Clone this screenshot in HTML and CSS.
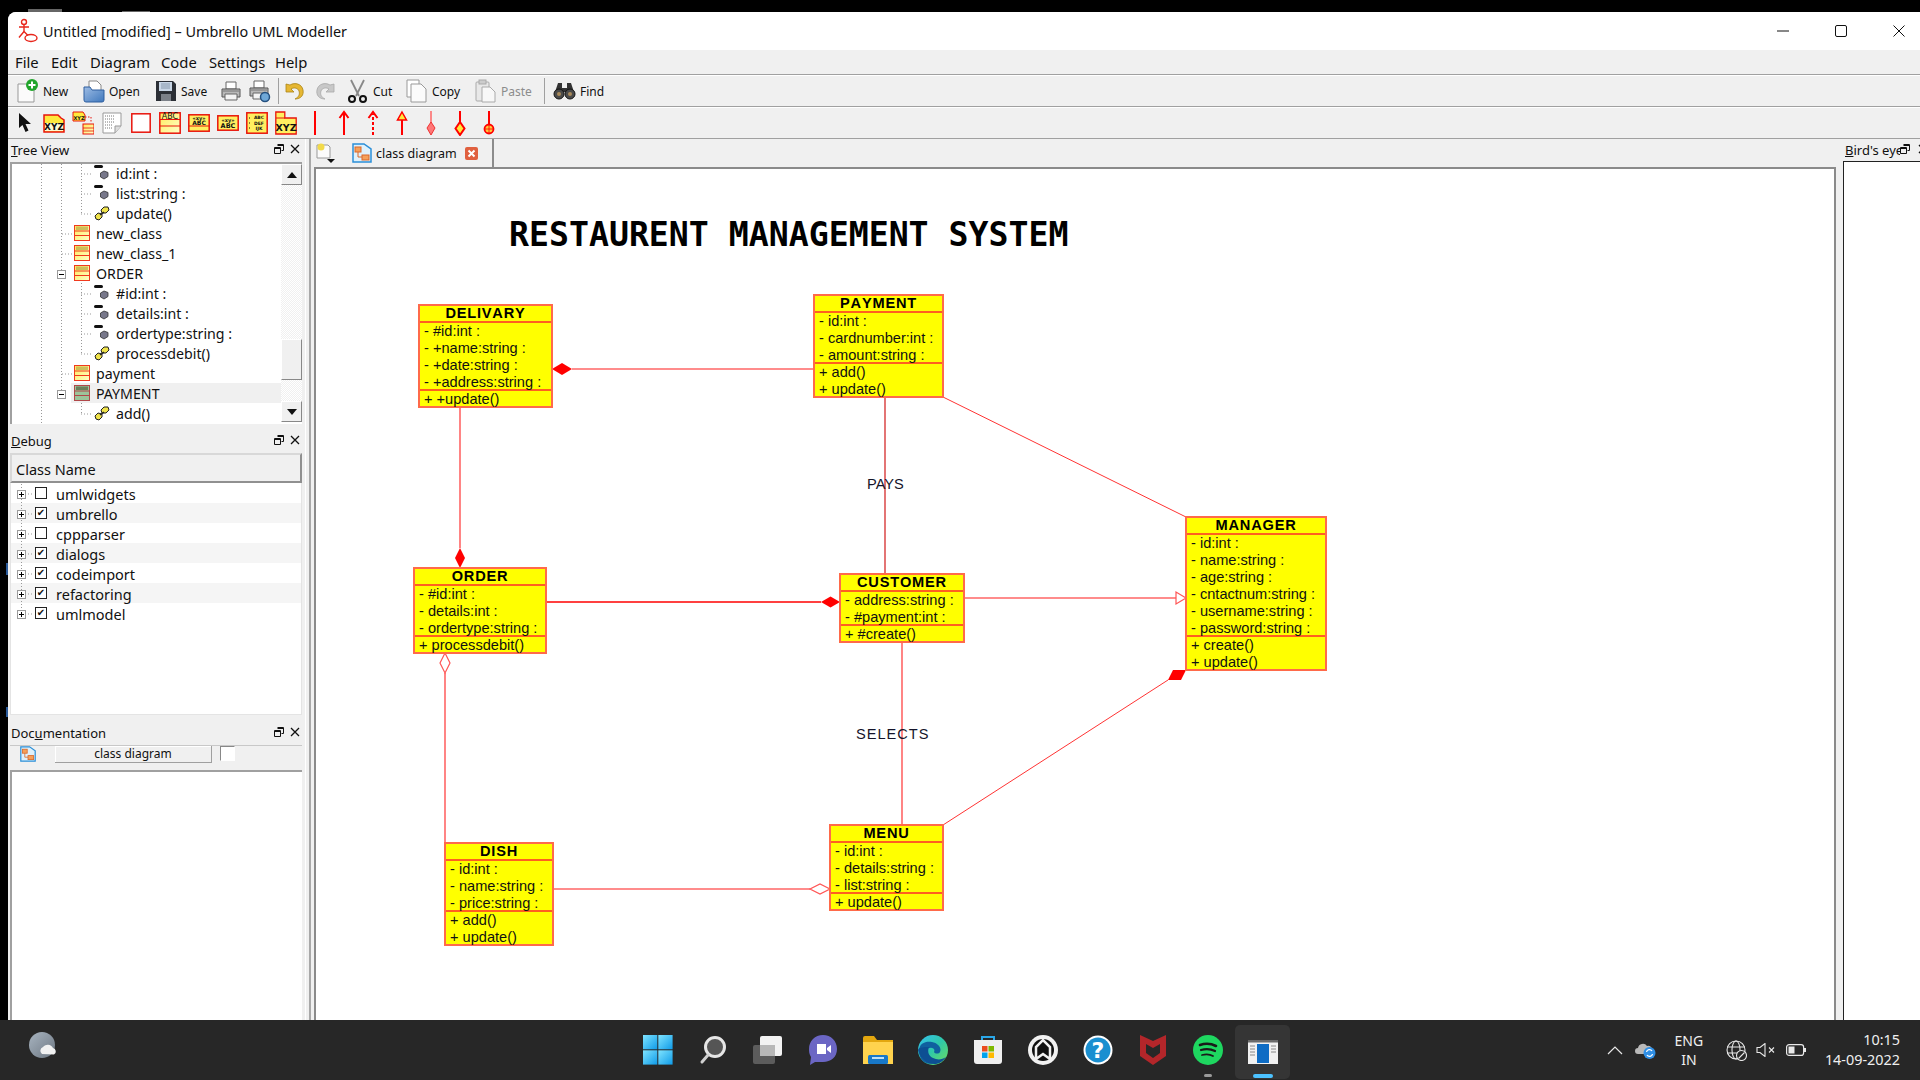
FILE: index.html
```html
<!DOCTYPE html>
<html lang="en">
<head>
  <meta charset="UTF-8" />
  <title>Untitled [modified] – Umbrello UML Modeller</title>
  <link rel="stylesheet" href="styles.css">
</head>
<body>

<svg class="defs" width="0" height="0">
  <defs>
    <linearGradient id="yel" x1="0" y1="0" x2="1" y2="1"><stop offset="0" stop-color="#ffe95a"/><stop offset="1" stop-color="#ffffc8"/></linearGradient>
    <linearGradient id="startg" x1="0" y1="0" x2="1" y2="1"><stop offset="0" stop-color="#7fe4ff"/><stop offset="1" stop-color="#0f9be8"/></linearGradient>
    <linearGradient id="edgeg" x1="0" y1="0" x2="1" y2="1"><stop offset="0" stop-color="#35c1f1"/><stop offset=".5" stop-color="#2fc8a8"/><stop offset="1" stop-color="#6fdc5c"/></linearGradient>
    <linearGradient id="blueg" x1="0" y1="0" x2="1" y2="1"><stop offset="0" stop-color="#9dbce4"/><stop offset="1" stop-color="#3f78bd"/></linearGradient>
    <symbol id="i-attr" viewBox="0 0 16 16">
      <rect x="0" y="0" width="9" height="3" rx="1.5" fill="#111"/>
      <path d="M10 6l4 1.5v4L10 14l-3.5-2v-4z" fill="#77778a" stroke="#333" stroke-width=".8"/>
    </symbol>
    <symbol id="i-op" viewBox="0 0 16 16">
      <path d="M1 11l3-3 4 1 0 3-3 3-3-1z" fill="#f0e34a" stroke="#222" stroke-width="1"/>
      <path d="M7 5l3-3 4 0 1 3-3 3-4 0z" fill="#f0e34a" stroke="#222" stroke-width="1"/>
      <path d="M6 10l4-3" stroke="#222" stroke-width="1.500"/>
    </symbol>
    <symbol id="i-class" viewBox="0 0 16 16">
      <rect x=".5" y=".5" width="15" height="15" fill="url(#yel)" stroke="#f03a1e"/>
      <path d="M1 6h14M1 10.500h14" stroke="#f03a1e"/>
      <rect x="2" y="1.500" width="12" height="3.500" fill="#b9a84a" opacity=".7"/>
    </symbol>
    <symbol id="i-class-sel" viewBox="0 0 16 16">
      <rect x=".5" y=".5" width="15" height="15" fill="#9cc59a" stroke="#b0484a"/>
      <path d="M1 6h14M1 10.500h14" stroke="#b0484a"/>
      <rect x="2" y="1.500" width="12" height="3.500" fill="#6b7f5a"/>
    </symbol>
    <symbol id="i-diagram" viewBox="0 0 20 20">
      <path d="M1 1h11l7 5v13H1z" fill="#dff1fb" stroke="#2b8fd8" stroke-width="1.500"/>
      <rect x="3" y="4" width="6" height="5" fill="#f5a05a" stroke="#d9682a"/>
      <rect x="10" y="12" width="7" height="5" fill="#f5a05a" stroke="#d9682a"/>
      <path d="M6 9v5h4" fill="none" stroke="#d9682a"/>
    </symbol>
    <symbol id="i-restore" viewBox="0 0 10 10">
      <path d="M3.500.5h6v6H7.500M.5 3.500h6v6h-6z" fill="none" stroke="#111"/>
      <path d="M3.500 1.500h6M.5 4.500h6" stroke="#111"/>
    </symbol>
    <symbol id="i-close" viewBox="0 0 10 10">
      <path d="M1 1l8 8M9 1l-8 8" stroke="#111" stroke-width="1.300"/>
    </symbol>
    <symbol id="i-plus" viewBox="0 0 9 9">
      <rect x=".5" y=".5" width="8" height="8" fill="#fff" stroke="#9a9a9a"/>
      <path d="M2 4.500h5M4.500 2v5" stroke="#000"/>
    </symbol>
    <symbol id="i-minus" viewBox="0 0 9 9">
      <rect x=".5" y=".5" width="8" height="8" fill="#fff" stroke="#9a9a9a"/>
      <path d="M2 4.500h5" stroke="#000"/>
    </symbol>
    <symbol id="i-printer" viewBox="0 0 22 22">
      <path d="M6 2h10v7H6z" fill="#fff" stroke="#666"/>
      <path d="M2 9h18v8H2z" fill="#b9b9b9" stroke="#555"/>
      <path d="M5 14h12v6H5z" fill="#f4f4f4" stroke="#666"/>
      <path d="M3 11h16" stroke="#777"/>
    </symbol>
  </defs>
</svg>

<span class="smudge smudge-a"></span>
<span class="smudge smudge-b"></span>
<span class="smudge smudge-c"></span>
<span class="smudge smudge-d"></span>

<div class="window">

  <header class="titlebar">
    <svg class="app-icon" width="21" height="26" viewBox="0 0 21 26">
      <g fill="none" stroke="#e8261c" stroke-width="1.400">
        <circle cx="7" cy="4" r="2.500"/>
        <path d="M7 6.500v7M2 9h10M7 13.500l-5 6M7 13.500l4 4"/>
        <ellipse cx="14" cy="20" rx="6" ry="3.500"/>
      </g>
    </svg>
    <span class="title-text">Untitled [modified] – Umbrello UML Modeller</span>
    <div class="win-controls">
      <svg width="14" height="14" viewBox="0 0 14 14"><path d="M1 7h12" stroke="#111"/></svg>
      <svg width="14" height="14" viewBox="0 0 14 14"><rect x="1.500" y="1.500" width="11" height="11" rx="1.500" fill="none" stroke="#111"/></svg>
      <svg width="14" height="14" viewBox="0 0 14 14"><path d="M1.500 1.500l11 11M12.500 1.500l-11 11" stroke="#111"/></svg>
    </div>
  </header>

  <nav class="menubar">
    <span>File</span><span>Edit</span><span>Diagram</span><span>Code</span><span>Settings</span><span>Help</span>
  </nav>

  <div class="toolbar">
    <div class="tb-btn tb-new">
      <svg width="22" height="24" viewBox="0 0 22 24"><path d="M1 5h11l5 5v13H1z" fill="#fbfbfb" stroke="#999"/><circle cx="15" cy="6" r="6" fill="#21a52b"/><path d="M15 2.500v7M11.500 6h7" stroke="#fff" stroke-width="2"/></svg>
      <span>New</span>
    </div>
    <div class="tb-btn tb-open">
      <svg width="22" height="24" viewBox="0 0 22 24"><path d="M6 2h8l4 4v9H6z" fill="#fff" stroke="#8a8a8a"/><path d="M1 8h6l2 3h12v10a2 2 0 0 1-2 2H3a2 2 0 0 1-2-2z" fill="url(#blueg)" stroke="#2f5f9f"/></svg>
      <span>Open</span>
    </div>
    <div class="tb-btn tb-save">
      <svg width="22" height="24" viewBox="0 0 22 24"><path d="M1 2h17l3 3v17H1z" fill="#2b2f36"/><rect x="4" y="3" width="13" height="9" fill="#c9d6e6"/><path d="M6 5h9M6 7h9M6 9h9" stroke="#8798ac"/><rect x="6" y="15" width="10" height="7" fill="#7b8088"/></svg>
      <span>Save</span>
    </div>
    <div class="tb-btn tb-print">
      <svg width="22" height="22"><use href="#i-printer"/></svg>
    </div>
    <div class="tb-btn tb-preview">
      <svg width="24" height="24" viewBox="0 0 24 24"><use href="#i-printer" width="22" height="22"/><circle cx="17" cy="18" r="4.500" fill="#6fa8d8" stroke="#24507f" stroke-width="1.500"/></svg>
    </div>
    <div class="tb-sep"></div>
    <div class="tb-btn tb-undo">
      <svg width="22" height="22" viewBox="0 0 22 22"><path d="M2 4v8h8l-3-3c3-2 7-1 8 2s0 6-4 8c6 0 9-4 8-9-1-6-8-8-13-5z" fill="#e6b733" stroke="#a98416" stroke-width=".8"/></svg>
    </div>
    <div class="tb-btn tb-redo">
      <svg width="22" height="22" viewBox="0 0 22 22"><path d="M20 4v8h-8l3-3c-3-2-7-1-8 2s0 6 4 8c-6 0-9-4-8-9 1-6 8-8 13-5z" fill="#c8c8c8" stroke="#a8a8a8" stroke-width=".8"/></svg>
    </div>
    <div class="tb-btn tb-cut">
      <svg width="23" height="24" viewBox="0 0 23 24"><path d="M5 1l8 16M18 1l-8 16" stroke="#888" stroke-width="1.800"/><circle cx="6" cy="20" r="3" fill="none" stroke="#111" stroke-width="2"/><circle cx="17" cy="20" r="3" fill="none" stroke="#111" stroke-width="2"/></svg>
      <span>Cut</span>
    </div>
    <div class="tb-btn tb-copy">
      <svg width="22" height="24" viewBox="0 0 22 24"><path d="M1 1h12v17H1z" fill="#fff" stroke="#999"/><path d="M5 5h10l5 5v13H5z" fill="#fbfbfb" stroke="#999"/></svg>
      <span>Copy</span>
    </div>
    <div class="tb-btn tb-paste tb-disabled">
      <svg width="22" height="24" viewBox="0 0 22 24"><rect x="1" y="3" width="13" height="19" rx="1" fill="#e8e8e8" stroke="#aaa"/><rect x="4" y="1" width="7" height="4" fill="#ccc" stroke="#aaa"/><path d="M7 8h8l5 5v10H7z" fill="#f8f8f8" stroke="#aaa"/></svg>
      <span>Paste</span>
    </div>
    <div class="tb-sep tb-sep-wide"></div>
    <div class="tb-btn tb-find">
      <svg width="23" height="22" viewBox="0 0 23 22"><path d="M5 3h4v5h5V3h4l3 9H2z" fill="#333"/><circle cx="6" cy="14" r="5" fill="#4a4a4a" stroke="#111"/><circle cx="17" cy="14" r="5" fill="#4a4a4a" stroke="#111"/><circle cx="6" cy="14" r="2" fill="#a98a5a"/><circle cx="17" cy="14" r="2" fill="#a98a5a"/></svg>
      <span>Find</span>
    </div>
  </div>

  <div class="toolbar uml-tools">
    <div class="tool"><svg width="14" height="20" viewBox="0 0 14 20"><path d="M1 0v15l3.500-3 3 7 3-1.500-3-6.500H13z" fill="#111"/></svg></div>
    <div class="tool"><svg width="22" height="20" viewBox="0 0 22 20"><path d="M1 2h14l3 3 3 2v12H1z" fill="#ffe93c" stroke="#e8140c" stroke-width="1.500"/><rect x="2" y="10" width="18" height="8" fill="#fffbd0"/><text class="tool-text" x="11" y="17" font-size="9">XYZ</text></svg></div>
    <div class="tool"><svg width="22" height="24" viewBox="0 0 22 24"><path d="M1 1h10l2 3v6H1z" fill="#ffe93c" stroke="#e8140c"/><text class="tool-text" x="7" y="9" font-size="5">XYZ</text><path d="M13 6h6v6" fill="none" stroke="#e8140c" stroke-dasharray="1.500 1.500"/><rect x="11" y="13" width="11" height="10" fill="url(#yel)" stroke="#e8140c"/><path d="M11 17h11M11 20h11" stroke="#e8140c" stroke-width=".8"/></svg></div>
    <div class="tool"><svg width="20" height="22" viewBox="0 0 20 22"><path d="M1 1h18v13l-6 7H1z" fill="#fff" stroke="#999"/><path d="M19 14h-6v7" fill="#ddd" stroke="#999"/><path d="M3 4h10M3 7h10M3 10h10M3 13h8M3 16h7" stroke="#777" stroke-dasharray="1 1"/></svg></div>
    <div class="tool"><svg width="20" height="20" viewBox="0 0 20 20"><rect x=".8" y=".8" width="18.400" height="18.400" fill="#fff" stroke="#e8140c" stroke-width="1.500"/></svg></div>
    <div class="tool"><svg width="22" height="22" viewBox="0 0 22 22"><rect x=".8" y=".8" width="20.400" height="20.400" fill="url(#yel)" stroke="#e8140c" stroke-width="1.500"/><path d="M1 7.500h20M1 14h20" stroke="#e8140c"/><text class="tool-text tool-light" x="11" y="7" font-size="8">ABC</text></svg></div>
    <div class="tool"><svg width="22" height="18" viewBox="0 0 22 18"><rect x=".8" y=".8" width="20.400" height="16.400" fill="#ffef60" stroke="#e8140c" stroke-width="1.500"/><path d="M1 12h20" stroke="#e8140c"/><text class="tool-text" x="11" y="5.500" font-size="5">«xy»</text><text class="tool-text" x="11" y="10.500" font-size="6">ABC</text></svg></div>
    <div class="tool"><svg width="22" height="16" viewBox="0 0 22 16"><rect x=".8" y=".8" width="20.400" height="14.400" fill="#ffef60" stroke="#e8140c" stroke-width="1.500"/><text class="tool-text" x="11" y="6.500" font-size="5">«xy»</text><text class="tool-text" x="11" y="13" font-size="6.500">ABC</text></svg></div>
    <div class="tool"><svg width="22" height="22" viewBox="0 0 22 22"><rect x=".8" y=".8" width="20.400" height="20.400" fill="#ffef60" stroke="#e8140c" stroke-width="1.500"/><path d="M3 6h1M3 11h1M3 16h1" stroke="#111"/><text class="tool-text" x="13" y="7" font-size="4.500">ABC</text><text class="tool-text" x="13" y="12.500" font-size="4.500">DEF</text><text class="tool-text" x="13" y="18" font-size="4.500">IJK</text></svg></div>
    <div class="tool"><svg width="22" height="24" viewBox="0 0 22 24"><path d="M.8 1h9v6h11.400v16H.8z" fill="#ffef60" stroke="#e8140c" stroke-width="1.300"/><path d="M1 7h9" stroke="#e8140c"/><text class="tool-text" x="11" y="20" font-size="9.500">XYZ</text></svg></div>
    <div class="tool"><svg width="6" height="26" viewBox="0 0 6 26"><path d="M3 1v24" stroke="#f00" stroke-width="2"/></svg></div>
    <div class="tool"><svg width="12" height="26" viewBox="0 0 12 26"><path d="M6 25V3M1.500 8L6 2l4.500 6" fill="none" stroke="#f00" stroke-width="2"/></svg></div>
    <div class="tool"><svg width="12" height="26" viewBox="0 0 12 26"><path d="M6 25V4" fill="none" stroke="#f00" stroke-width="2" stroke-dasharray="3 2"/><path d="M1.500 8L6 2l4.500 6" fill="none" stroke="#f00" stroke-width="2"/></svg></div>
    <div class="tool"><svg width="12" height="26" viewBox="0 0 12 26"><path d="M6 25V10" stroke="#f00" stroke-width="2"/><path d="M6 2l4.500 8h-9z" fill="#ffe93c" stroke="#f00" stroke-width="1.500"/></svg></div>
    <div class="tool"><svg width="10" height="26" viewBox="0 0 10 26"><path d="M5 1v12" stroke="#f66" stroke-width="1.500"/><path d="M5 12l4 6-4 7-4-7z" fill="#f77" stroke="#e33"/></svg></div>
    <div class="tool"><svg width="12" height="26" viewBox="0 0 12 26"><path d="M6 1v11" stroke="#f00" stroke-width="2"/><path d="M6 12l4.500 6.500L6 25l-4.500-6.500z" fill="#ffe93c" stroke="#f00" stroke-width="2"/></svg></div>
    <div class="tool"><svg width="12" height="26" viewBox="0 0 12 26"><path d="M6 1v14" stroke="#f00" stroke-width="2"/><circle cx="6" cy="19" r="4.500" fill="#ffc93c" stroke="#f00" stroke-width="1.800"/><path d="M6 15v8M2 19h8" stroke="#f00" stroke-width=".8"/></svg></div>
  </div>

  <main class="workspace">

    <aside class="left-docks">
      <section class="dock dock-tree">
        <div class="dock-title"><span><u>T</u>ree View</span><span class="dock-btns"><svg width="10" height="10"><use href="#i-restore"/></svg><svg width="10" height="10"><use href="#i-close"/></svg></span></div>
        <div class="tree-box">
          <svg class="tree-guides" width="269" height="260" viewBox="12 164 269 260">
            <g fill="none" stroke="#999" stroke-dasharray="1 2">
              <path d="M41.500 164v260M61.500 164v230M81.500 164v50M81.500 274v80M81.500 394v20"/>
              <path d="M81 174h12M81 194h12M81 214h12M81 294h12M81 314h12M81 334h12M81 354h12M81 414h12"/>
              <path d="M62 234h11M62 254h11M62 374h11"/>
            </g>
            <use href="#i-minus" x="57" y="270" width="9" height="9"/>
            <use href="#i-minus" x="57" y="390" width="9" height="9"/>
          </svg>
          <div class="tree-rows">
            <div class="tree-row depth3"><svg width="16" height="16"><use href="#i-attr"/></svg><span>id:int :</span></div>
            <div class="tree-row depth3"><svg width="16" height="16"><use href="#i-attr"/></svg><span>list:string :</span></div>
            <div class="tree-row depth3"><svg width="16" height="16"><use href="#i-op"/></svg><span>update()</span></div>
            <div class="tree-row depth2"><svg width="16" height="16"><use href="#i-class"/></svg><span>new_class</span></div>
            <div class="tree-row depth2"><svg width="16" height="16"><use href="#i-class"/></svg><span>new_class_1</span></div>
            <div class="tree-row depth2"><svg width="16" height="16"><use href="#i-class"/></svg><span>ORDER</span></div>
            <div class="tree-row depth3"><svg width="16" height="16"><use href="#i-attr"/></svg><span>#id:int :</span></div>
            <div class="tree-row depth3"><svg width="16" height="16"><use href="#i-attr"/></svg><span>details:int :</span></div>
            <div class="tree-row depth3"><svg width="16" height="16"><use href="#i-attr"/></svg><span>ordertype:string :</span></div>
            <div class="tree-row depth3"><svg width="16" height="16"><use href="#i-op"/></svg><span>processdebit()</span></div>
            <div class="tree-row depth2"><svg width="16" height="16"><use href="#i-class"/></svg><span>payment</span></div>
            <div class="tree-row depth2 selected"><svg width="16" height="16"><use href="#i-class-sel"/></svg><span>PAYMENT</span></div>
            <div class="tree-row depth3"><svg width="16" height="16"><use href="#i-op"/></svg><span>add()</span></div>
          </div>
          <div class="scrollbar">
            <div class="sb-btn"><svg width="10" height="6" viewBox="0 0 10 6"><path d="M5 0l5 6H0z" fill="#111"/></svg></div>
            <div class="sb-track"><div class="sb-thumb"></div></div>
            <div class="sb-btn"><svg width="10" height="6" viewBox="0 0 10 6"><path d="M5 6L0 0h10z" fill="#111"/></svg></div>
          </div>
        </div>
      </section>

      <section class="dock dock-debug">
        <div class="dock-title"><span><u>D</u>ebug</span><span class="dock-btns"><svg width="10" height="10"><use href="#i-restore"/></svg><svg width="10" height="10"><use href="#i-close"/></svg></span></div>
        <div class="debug-box">
          <div class="debug-head">Class Name</div>
          <svg class="debug-guides" width="30" height="140" viewBox="12 484 30 140">
            <g fill="none" stroke="#999" stroke-dasharray="1 2"><path d="M21.500 484v130M22 494h10M22 514h10M22 534h10M22 554h10M22 574h10M22 594h10M22 614h10"/></g>
            <use href="#i-plus" x="17" y="490" width="9" height="9"/>
            <use href="#i-plus" x="17" y="510" width="9" height="9"/>
            <use href="#i-plus" x="17" y="530" width="9" height="9"/>
            <use href="#i-plus" x="17" y="550" width="9" height="9"/>
            <use href="#i-plus" x="17" y="570" width="9" height="9"/>
            <use href="#i-plus" x="17" y="590" width="9" height="9"/>
            <use href="#i-plus" x="17" y="610" width="9" height="9"/>
          </svg>
          <div class="debug-row"><span class="check"></span><span>umlwidgets</span></div>
          <div class="debug-row"><span class="check on">✔</span><span>umbrello</span></div>
          <div class="debug-row"><span class="check"></span><span>cppparser</span></div>
          <div class="debug-row"><span class="check on">✔</span><span>dialogs</span></div>
          <div class="debug-row"><span class="check on">✔</span><span>codeimport</span></div>
          <div class="debug-row"><span class="check on">✔</span><span>refactoring</span></div>
          <div class="debug-row"><span class="check on">✔</span><span>umlmodel</span></div>
        </div>
      </section>

      <section class="dock dock-doc">
        <div class="dock-title"><span>Doc<u>u</u>mentation</span><span class="dock-btns"><svg width="10" height="10"><use href="#i-restore"/></svg><svg width="10" height="10"><use href="#i-close"/></svg></span></div>
        <div class="doc-row">
          <svg width="16" height="16"><use href="#i-diagram"/></svg>
          <div class="doc-name">class diagram</div>
          <div class="doc-check"></div>
        </div>
        <div class="doc-text"></div>
      </section>
    </aside>

    <section class="center">
      <div class="tabbar">
        <div class="new-tab">
          <svg width="20" height="22" viewBox="0 0 20 22"><path d="M1 3h11l2 2v11H1z" fill="#fbfbfb" stroke="#999"/><circle cx="5" cy="5" r="3.500" fill="#f2da4a"/><path d="M11 17h8l-4 4z" fill="#111"/></svg>
        </div>
        <div class="tab">
          <svg width="20" height="20"><use href="#i-diagram"/></svg>
          <span>class diagram</span>
          <svg width="13" height="13" viewBox="0 0 13 13"><rect width="13" height="13" rx="2" fill="#e0603f"/><path d="M3.500 3.500l6 6M9.500 3.500l-6 6" stroke="#fff" stroke-width="2"/></svg>
        </div>
      </div>

      <div class="canvas">
        <svg class="wires" width="1518" height="851" viewBox="316 169 1518 851">
          <!-- associations, drawn in window coordinates -->
          <g fill="none" stroke="#f66" stroke-width="1.600">
            <path d="M572 369H814"/>
            <path d="M460 407V548"/>
            <path d="M445 673V843"/>
            <path d="M902 642V825"/>
            <path d="M553 889H810"/>
            <path d="M964 598H1176"/>
          </g>
          <path d="M546 602H821" stroke="#f00" stroke-width="1.300"/>
          <path d="M885 397V573" stroke="#d01818" stroke-width="1.200"/>
          <path d="M943 397L1186 517" stroke="#f33" stroke-width="1"/>
          <path d="M943 825L1168 680" stroke="#f33" stroke-width="1"/>
          <path d="M552 369l10-6 10 6-10 6z" fill="#f00"/>
          <path d="M460 548l5 10-5 10-5-10z" fill="#f00"/>
          <path d="M840 602l-9.500-5.500L821 602l9.500 5.500z" fill="#f00"/>
          <path d="M1186 670h-13l-5 10h13z" fill="#f00"/>
          <path d="M445 653l5 10-5 10-5-10z" fill="#fff" stroke="#f55" stroke-width="1.200"/>
          <path d="M830 889l-10-5-10 5 10 5z" fill="#fff" stroke="#f55" stroke-width="1.200"/>
          <path d="M1186 598l-10-6v12z" fill="#fff" stroke="#f55" stroke-width="1.200"/>
        </svg>

        <div class="diagram-title">RESTAURENT MANAGEMENT SYSTEM</div>
        <div class="wire-label label-pays">PAYS</div>
        <div class="wire-label label-selects">SELECTS</div>

        <div class="uml-class cls-delivary">
          <div class="cls-name">DELIVARY</div>
          <div class="cls-attrs"><div>- #id:int :</div><div>- +name:string :</div><div>- +date:string :</div><div>- +address:string :</div></div>
          <div class="cls-ops"><div>+ +update()</div></div>
        </div>
        <div class="uml-class cls-payment">
          <div class="cls-name">PAYMENT</div>
          <div class="cls-attrs"><div>- id:int :</div><div>- cardnumber:int :</div><div>- amount:string :</div></div>
          <div class="cls-ops"><div>+ add()</div><div>+ update()</div></div>
        </div>
        <div class="uml-class cls-order">
          <div class="cls-name">ORDER</div>
          <div class="cls-attrs"><div>- #id:int :</div><div>- details:int :</div><div>- ordertype:string :</div></div>
          <div class="cls-ops"><div>+ processdebit()</div></div>
        </div>
        <div class="uml-class cls-customer">
          <div class="cls-name">CUSTOMER</div>
          <div class="cls-attrs"><div>- address:string :</div><div>- #payment:int :</div></div>
          <div class="cls-ops"><div>+ #create()</div></div>
        </div>
        <div class="uml-class cls-manager">
          <div class="cls-name">MANAGER</div>
          <div class="cls-attrs"><div>- id:int :</div><div>- name:string :</div><div>- age:string :</div><div>- cntactnum:string :</div><div>- username:string :</div><div>- password:string :</div></div>
          <div class="cls-ops"><div>+ create()</div><div>+ update()</div></div>
        </div>
        <div class="uml-class cls-dish">
          <div class="cls-name">DISH</div>
          <div class="cls-attrs"><div>- id:int :</div><div>- name:string :</div><div>- price:string :</div></div>
          <div class="cls-ops"><div>+ add()</div><div>+ update()</div></div>
        </div>
        <div class="uml-class cls-menu">
          <div class="cls-name">MENU</div>
          <div class="cls-attrs"><div>- id:int :</div><div>- details:string :</div><div>- list:string :</div></div>
          <div class="cls-ops"><div>+ update()</div></div>
        </div>
      </div>
    </section>

    <aside class="right-dock">
      <div class="dock-title"><span class="birds-title"><u>B</u>ird's eye</span><span class="dock-btns"><svg width="10" height="10"><use href="#i-restore"/></svg><svg width="10" height="10"><use href="#i-close"/></svg></span></div>
      <div class="birds-box"></div>
    </aside>

  </main>
</div>

<footer class="taskbar">
  <div class="weather">
    <svg width="30" height="28" viewBox="0 0 30 28"><defs><linearGradient id="moon" x1="0" y1="0" x2="1" y2="1"><stop offset="0" stop-color="#a8b4c0"/><stop offset="1" stop-color="#6d7782"/></linearGradient></defs><circle cx="14" cy="13" r="13" fill="url(#moon)"/><path d="M14 22a4 4 0 0 1 1-7 6 6 0 0 1 10 1 3.500 3.500 0 0 1 1 6.500z" fill="#f1f1f1"/></svg>
  </div>

  <div class="task-icons">
    <div class="task-icon">
      <svg width="30" height="30" viewBox="0 0 30 30"><rect width="14.300" height="14.300" fill="url(#startg)"/><rect x="15.300" width="14.300" height="14.300" fill="url(#startg)"/><rect y="15.300" width="14.300" height="14.300" fill="url(#startg)"/><rect x="15.300" y="15.300" width="14.300" height="14.300" fill="url(#startg)"/></svg>
    </div>
    <div class="task-icon">
      <svg width="28" height="30" viewBox="0 0 28 30"><circle cx="16" cy="12" r="9.500" fill="#555" stroke="#e6e6e6" stroke-width="3"/><path d="M9 20l-6 7" stroke="#d0d0d0" stroke-width="3" stroke-linecap="round"/></svg>
    </div>
    <div class="task-icon">
      <svg width="30" height="28" viewBox="0 0 30 28"><rect x="0" y="9" width="22" height="19" rx="2" fill="#5c5c5c"/><rect x="7" y="0" width="22" height="20" rx="2" fill="#f3f3f3"/><rect x="7" y="9" width="15" height="11" fill="#b8b8b8"/></svg>
    </div>
    <div class="task-icon">
      <svg width="28" height="30" viewBox="0 0 28 30"><path d="M14 0c8 0 14 6 14 14s-6 13-14 13H6l-5 3 1-8C0 19 0 16 0 14 0 6 6 0 14 0z" fill="#6b66c4"/><path d="M8 9h9v10H8zM18 13l4-3v8l-4-3z" fill="#fff"/></svg>
    </div>
    <div class="task-icon">
      <svg width="30" height="28" viewBox="0 0 30 28"><path d="M0 2a2 2 0 0 1 2-2h9l3 4h16v24H0z" fill="#e3a70f"/><path d="M0 6h30v22H0z" fill="#ffd34e"/><rect x="5" y="19" width="20" height="9" rx="1.500" fill="#1878c8"/><rect x="9" y="21" width="12" height="2" fill="#bfe0f5"/></svg>
    </div>
    <div class="task-icon">
      <svg width="30" height="30" viewBox="0 0 30 30"><circle cx="15" cy="15" r="15" fill="url(#edgeg)"/><path d="M1 16C1 8 8 6 14 7c6 1 10 6 8 10-1 2-5 2-6 0 2-4-4-6-8-2-4 5 0 13 8 13-8 3-15-3-15-12z" fill="#10609f"/><path d="M0 15c2 8 9 15 18 14 5-1 8-4 10-7-4 3-9 3-13 1-4-2-6-6-4-11-5 0-10 0-11 3z" fill="#0d4f93"/></svg>
    </div>
    <div class="task-icon">
      <svg width="30" height="30" viewBox="0 0 30 30"><path d="M9 6V2h12v4" fill="none" stroke="#2aa7e8" stroke-width="2"/><path d="M1 5h28v21a3 3 0 0 1-3 3H4a3 3 0 0 1-3-3z" fill="#efefef"/><rect x="9" y="11" width="5.500" height="5.500" fill="#ea4c1f"/><rect x="15.500" y="11" width="5.500" height="5.500" fill="#7eb900"/><rect x="9" y="17.500" width="5.500" height="5.500" fill="#00a3ee"/><rect x="15.500" y="17.500" width="5.500" height="5.500" fill="#ffb900"/></svg>
    </div>
    <div class="task-icon">
      <svg width="30" height="30" viewBox="0 0 30 30"><circle cx="15" cy="15" r="15" fill="#f2f2f2"/><circle cx="15" cy="15" r="11" fill="#111"/><path d="M8 24V12l7-7 7 7v12l-7-5z" fill="none" stroke="#f2f2f2" stroke-width="2.500"/></svg>
    </div>
    <div class="task-icon">
      <svg width="30" height="30" viewBox="0 0 30 30"><circle cx="15" cy="15" r="14.500" fill="#fff"/><circle cx="15" cy="15" r="12.500" fill="#1a8fd0"/><text class="help-mark" x="15" y="23" font-size="22">?</text></svg>
    </div>
    <div class="task-icon">
      <svg width="28" height="30" viewBox="0 0 28 30"><path d="M1 0l13 6 13-6v21l-13 9-13-9z" fill="#b3262a"/><path d="M7 9l7 4 7-4v9l-7 5-7-5z" fill="#272727"/></svg>
    </div>
    <div class="task-icon task-dot">
      <svg width="30" height="30" viewBox="0 0 30 30"><circle cx="15" cy="15" r="15" fill="#1ed760"/><g fill="none" stroke="#1a1a1a" stroke-linecap="round"><path d="M7 10c6-2 11-1.500 16 1" stroke-width="2.600"/><path d="M8 15c5-1.500 10-1 14 1" stroke-width="2.200"/><path d="M9 20c4-1 8-.8 11 1" stroke-width="1.800"/></g></svg>
    </div>
    <div class="task-icon task-active">
      <svg width="30" height="24" viewBox="0 0 30 24"><rect width="30" height="24" fill="#f1f1f1"/><rect width="30" height="2.500" fill="#6b6b6b"/><rect x="9" y="4" width="12" height="19" fill="#0e6cc4"/><path d="M2 6h5M2 9h5M2 12h5M2 15h5M23 6h5M23 9h5M23 12h5" stroke="#888"/></svg>
    </div>
  </div>

  <div class="tray">
    <svg width="16" height="10" viewBox="0 0 16 10"><path d="M1 9l7-7 7 7" fill="none" stroke="#e8e8e8" stroke-width="1.200"/></svg>
    <svg class="tray-cloud" width="21" height="18" viewBox="0 0 21 18"><path d="M3 13a3 3 0 0 1 0-6 5 5 0 0 1 9-2 4 4 0 0 1 5 5v3z" fill="#b9b9b9"/><circle cx="14.500" cy="12" r="6" fill="#2f8fe6"/><path d="M11.500 11a3 3 0 0 1 5.500-1M17.500 13a3 3 0 0 1-5.500 1" fill="none" stroke="#fff" stroke-width="1.300"/></svg>
    <div class="lang"><span>ENG</span><span>IN</span></div>
    <svg class="tray-globe" width="21" height="21" viewBox="0 0 21 21"><g fill="none" stroke="#e8e8e8" stroke-width="1.100"><circle cx="10" cy="10" r="9"/><ellipse cx="10" cy="10" rx="4" ry="9"/><path d="M1 7h18M1 13h10"/></g><circle cx="15.500" cy="15.500" r="5" fill="#272727" stroke="#e8e8e8" stroke-width="1.100"/><path d="M12.500 18.500l6-6" stroke="#e8e8e8" stroke-width="1.100"/></svg>
    <svg width="20" height="14" viewBox="0 0 20 14"><path d="M1 4.500h3l5-4v13l-5-4H1z" fill="none" stroke="#e8e8e8" stroke-width="1.100"/><path d="M13 4.500l5 5M18 4.500l-5 5" stroke="#e8e8e8" stroke-width="1.100"/></svg>
    <svg width="20" height="12" viewBox="0 0 20 12"><rect x=".6" y=".6" width="17" height="10.800" rx="2.500" fill="none" stroke="#e8e8e8" stroke-width="1.200"/><rect x="2.500" y="2.500" width="6" height="7" fill="#e8e8e8"/><rect x="18" y="4" width="2" height="4" fill="#e8e8e8"/></svg>
    <div class="clock"><span>10:15</span><span>14-09-2022</span></div>
  </div>
</footer>

</body>
</html>
```

FILE: styles.css
```css
* {
  box-sizing: border-box;
}

html, body {
  margin: 0;
  height: 1080px;
  overflow: hidden;
}

body {
  background: #000;
  font-family: "Noto Sans", sans-serif;
  font-size: 14px;
  color: #111;
  display: flex;
  flex-direction: column;
}

.defs {
  position: absolute;
}

u {
  text-decoration-thickness: 1px;
}

/* bits of the desktop showing round the window */
.smudge {
  position: absolute;
  background: #666;
}

.smudge-a { left: 28px; top: 9px; width: 34px; height: 3px; }
.smudge-b { left: 122px; top: 11px; width: 28px; height: 1px; }
.smudge-c { left: 6px; top: 563px; width: 2px; height: 12px; background: #2a5a9a; }
.smudge-d { left: 6px; top: 707px; width: 2px; height: 10px; background: #2a5a9a; }

.window {
  margin: 12px 0 0 8px;
  height: 1008px;
  background: #f0f0f0;
  border-top-left-radius: 8px;
  overflow: hidden;
  display: flex;
  flex-direction: column;
}

.titlebar {
  height: 38px;
  flex: none;
  background: #fff;
  display: flex;
  align-items: center;
  padding-left: 9px;
}

.app-icon {
  margin-right: 5px;
}

.title-text {
  font-size: 14.400px;
}

.win-controls {
  margin-left: auto;
  padding-right: 14px;
  display: flex;
  gap: 44px;
}

.menubar {
  height: 25px;
  flex: none;
  display: grid;
  grid-template-columns: 36px 39px 71px 48px 66px auto;
  align-items: center;
  padding: 0 0 0 7px;
  font-size: 14.800px;
  border-bottom: 1px solid #a0a0a0;
}

.toolbar {
  height: 32px;
  flex: none;
  display: flex;
  align-items: center;
  padding-left: 9px;
  border-bottom: 1px solid #a0a0a0;
  box-shadow: inset 0 1px 0 #fff;
  font-size: 12px;
}

.tb-btn {
  display: flex;
  align-items: center;
  gap: 4px;
  flex: none;
}

.tb-btn span {
  padding-top: 1px;
}

.tb-disabled span {
  color: #8c8c8c;
}

.tb-new { width: 66px; }
.tb-open { width: 72px; }
.tb-save { width: 65px; }
.tb-print { width: 28px; }
.tb-preview { width: 30px; }
.tb-undo { width: 30px; }
.tb-redo { width: 32px; }
.tb-cut { width: 60px; }
.tb-copy { width: 69px; }
.tb-paste { width: 69px; }

.tb-sep {
  width: 6px;
  height: 26px;
  flex: none;
  border-left: 1px solid #a0a0a0;
}

.tb-sep-wide {
  width: 9px;
}

.uml-tools {
  padding-left: 2px;
}

.tool {
  width: 29px;
  flex: none;
  display: flex;
  justify-content: center;
  align-items: center;
}

.tool-text {
  font-family: "DejaVu Sans", sans-serif;
  font-weight: bold;
  text-anchor: middle;
  fill: #111;
}

.tool-light {
  font-weight: normal;
}

.workspace {
  flex: 1;
  min-height: 0;
  display: flex;
}

.left-docks {
  width: 297px;
  flex: none;
  display: flex;
  flex-direction: column;
  padding: 0 3px 0 2px;
}

.dock-title {
  height: 23px;
  flex: none;
  display: flex;
  align-items: center;
  justify-content: space-between;
  font-size: 13px;
  padding: 0 2px 2px 1px;
}

.dock-btns {
  display: flex;
  align-items: center;
  gap: 6px;
  margin-top: -2px;
}

.dock-btns svg {
  flex: none;
}

.dock-tree {
  height: 291px;
  flex: none;
}

.tree-box {
  height: 262px;
  position: relative;
  background: #fff;
  border: solid #a0a0a0;
  border-width: 2px 0 0 2px;
  display: flex;
  overflow: hidden;
}

.tree-guides {
  position: absolute;
  left: 0;
  top: 0;
}

.tree-rows {
  position: relative;
  width: 269px;
  flex: none;
  margin-top: -1px;
}

.tree-row {
  height: 20px;
  display: flex;
  align-items: center;
  gap: 6px;
  font-size: 14.200px;
  white-space: nowrap;
}

.depth2 { padding-left: 62px; }
.depth3 { padding-left: 82px; }

.selected {
  margin-left: 59px;
  padding-left: 3px;
  background: #f0f0f0;
}

.scrollbar {
  width: 21px;
  flex: none;
  display: flex;
  flex-direction: column;
  height: 258px;
}

.sb-btn {
  height: 21px;
  flex: none;
  display: flex;
  align-items: center;
  justify-content: center;
  background: #f0f0f0;
  border: 1px solid;
  border-color: #fff #888 #888 #fff;
}

.sb-track {
  flex: 1;
  position: relative;
  background: repeating-conic-gradient(#f0f0f0 0 25%, #fff 0 50%) 0 0 / 2px 2px;
}

.sb-thumb {
  position: absolute;
  left: 0;
  right: 0;
  top: 154px;
  height: 41px;
  background: #f0f0f0;
  border: 1px solid;
  border-color: #fff #888 #888 #fff;
}

.dock-debug {
  height: 292px;
  flex: none;
}

.debug-box {
  height: 262px;
  position: relative;
  background: #fff;
  border: 1px solid #e4e4e4;
  font-size: 14.500px;
}

.debug-head {
  height: 30px;
  margin: -1px -1px 0;
  display: flex;
  align-items: center;
  padding: 2px 0 0 4px;
  background: #f0f0f0;
  border: 2px solid;
  border-color: #d8d8d8 #909090 #909090 #d8d8d8;
}

.debug-guides {
  position: absolute;
  left: 1px;
  top: 30px;
}

.debug-row {
  height: 20px;
  display: flex;
  align-items: center;
  gap: 9px;
  padding: 1px 0 0 24px;
}

.debug-row:nth-of-type(odd) {
  background: #f5f5f5;
}

.check {
  width: 12px;
  height: 12px;
  margin-top: -2px;
  border: 1px solid #222;
  background: #fff;
  font-size: 10px;
  line-height: 10px;
  text-align: center;
  font-family: "DejaVu Sans", sans-serif;
}

.dock-doc {
  flex: 1;
  display: flex;
  flex-direction: column;
}

.doc-row {
  height: 25px;
  flex: none;
  display: flex;
  align-items: flex-start;
  border-top: 1px solid #c8c8c8;
  font-size: 12px;
}

.doc-row svg {
  margin: 0 0 0 10px;
}

.doc-name {
  width: 157px;
  height: 17px;
  margin-left: 19px;
  text-align: center;
  line-height: 15px;
  border: solid #a0a0a0;
  border-width: 0 1px 1px 0;
  box-shadow: inset 1px 1px 0 #fff;
}

.doc-check {
  width: 15px;
  height: 15px;
  margin-left: 8px;
  background: #fff;
  border: 1px solid;
  border-color: #888 #fff #fff #888;
}

.doc-text {
  flex: 1;
  background: #fff;
  border: solid #a0a0a0;
  border-width: 2px 0 0 2px;
}

.center {
  width: 1538px;
  flex: none;
  display: flex;
  flex-direction: column;
  padding: 0 7px 0 8px;
  border-left: 1px solid #fff;
  position: relative;
}

.center::before {
  content: "";
  position: absolute;
  left: 3px;
  top: 0;
  bottom: 0;
  width: 2px;
  background: #a8a8a8;
}

.tabbar {
  height: 28px;
  flex: none;
  display: flex;
  align-items: center;
  font-size: 12.500px;
}

.new-tab {
  width: 25px;
  display: flex;
  justify-content: center;
  margin-left: -1px;
  margin-right: 1px;
}

.tab {
  width: 155px;
  height: 28px;
  display: flex;
  align-items: center;
  gap: 4px;
  padding-left: 13px;
  border-right: 2px solid #8c8c8c;
}

.tab span {
  margin-right: 4px;
}

.canvas {
  flex: 1;
  min-height: 0;
  position: relative;
  background: #fff;
  border: solid #8a8a8a;
  border-width: 2px 2px 0 2px;
  overflow: hidden;
}

.wires {
  position: absolute;
  left: 0;
  top: 0;
}

.diagram-title {
  position: absolute;
  left: 193px;
  top: 46px;
  font-family: "DejaVu Sans Mono", monospace;
  font-weight: bold;
  font-size: 33.200px;
  line-height: 40px;
  white-space: nowrap;
  color: #000;
}

.wire-label {
  position: absolute;
  font-family: "Liberation Sans", sans-serif;
  font-size: 14.600px;
  line-height: 18px;
  color: #14142a;
}

.label-pays { left: 551px; top: 306px; }
.label-selects { left: 540px; top: 556px; letter-spacing: 1px; }

.uml-class {
  position: absolute;
  background: #ff0;
  border: 2px solid #ff6a4a;
  font-family: "Liberation Sans", sans-serif;
  font-size: 14.600px;
  color: #111;
  white-space: nowrap;
}

.cls-name {
  height: 17px;
  line-height: 15px;
  border-bottom: 2px solid #ff6020;
  text-align: center;
  font-weight: bold;
  font-kerning: none;
  letter-spacing: .8px;
  color: #000;
}

.cls-attrs div,
.cls-ops div {
  height: 17px;
  line-height: 19px;
}

.cls-attrs {
  margin-top: -1px;
  padding-left: 4px;
}

.cls-ops {
  margin: -1px 0 -1px;
  padding-left: 4px;
  border-top: 2px solid #ff6020;
}

.cls-ops div:first-child {
  margin-top: -1px;
}

.cls-delivary { left: 102px; top: 135px; width: 135px; }
.cls-payment { left: 497px; top: 125px; width: 131px; }
.cls-order { left: 97px; top: 398px; width: 134px; }
.cls-customer { left: 523px; top: 404px; width: 126px; }
.cls-manager { left: 869px; top: 347px; width: 142px; }
.cls-dish { left: 128px; top: 673px; width: 110px; }
.cls-menu { left: 513px; top: 655px; width: 115px; }

.right-dock {
  flex: 1;
  min-width: 0;
  display: flex;
  flex-direction: column;
  overflow: hidden;
}

.right-dock .dock-title {
  height: 22px;
  padding: 0;
}

.birds-title {
  width: 57px;
  padding-left: 2px;
  overflow: hidden;
  white-space: nowrap;
}

.right-dock .dock-btns {
  width: 20px;
  flex: none;
  overflow: hidden;
  gap: 8px;
}

.birds-box {
  flex: 1;
  background: #fff;
  border: solid #222;
  border-width: 1px 0 0 1px;
}

.taskbar {
  height: 60px;
  flex: none;
  background: #272727;
  color: #efefef;
  display: flex;
  align-items: center;
  position: relative;
}

.weather {
  position: absolute;
  left: 28px;
  top: 12px;
}

.task-icons {
  margin: 0 auto;
  display: flex;
  height: 60px;
}

.task-icon {
  width: 55px;
  height: 60px;
  display: flex;
  align-items: center;
  justify-content: center;
  position: relative;
}

.help-mark {
  font-family: "DejaVu Sans", sans-serif;
  font-weight: bold;
  text-anchor: middle;
  fill: #fff;
}

.task-dot::after {
  content: "";
  position: absolute;
  left: 24px;
  bottom: 3px;
  width: 8px;
  height: 3px;
  border-radius: 2px;
  background: #9a9a9a;
}

.task-active {
  background: #353535;
  border-radius: 5px;
  margin: 5px 0 1px;
  height: 54px;
}

.task-active::after {
  content: "";
  position: absolute;
  left: 18px;
  bottom: 1px;
  width: 20px;
  height: 4px;
  border-radius: 2px;
  background: #4cc2ff;
}

.tray {
  position: absolute;
  right: 20px;
  top: 0;
  height: 60px;
  display: flex;
  align-items: center;
}

.tray-cloud {
  margin-left: 12px;
}

.lang {
  width: 34px;
  margin-left: 16px;
  display: flex;
  flex-direction: column;
  align-items: center;
  line-height: 19px;
  font-size: 14px;
}

.tray-globe {
  margin: 0 9px 0 20px;
}

.tray svg + svg:last-of-type {
  margin-left: 10px;
}

.clock {
  margin-left: 19px;
  display: flex;
  flex-direction: column;
  align-items: flex-end;
  line-height: 20px;
  font-size: 14.400px;
}
```
